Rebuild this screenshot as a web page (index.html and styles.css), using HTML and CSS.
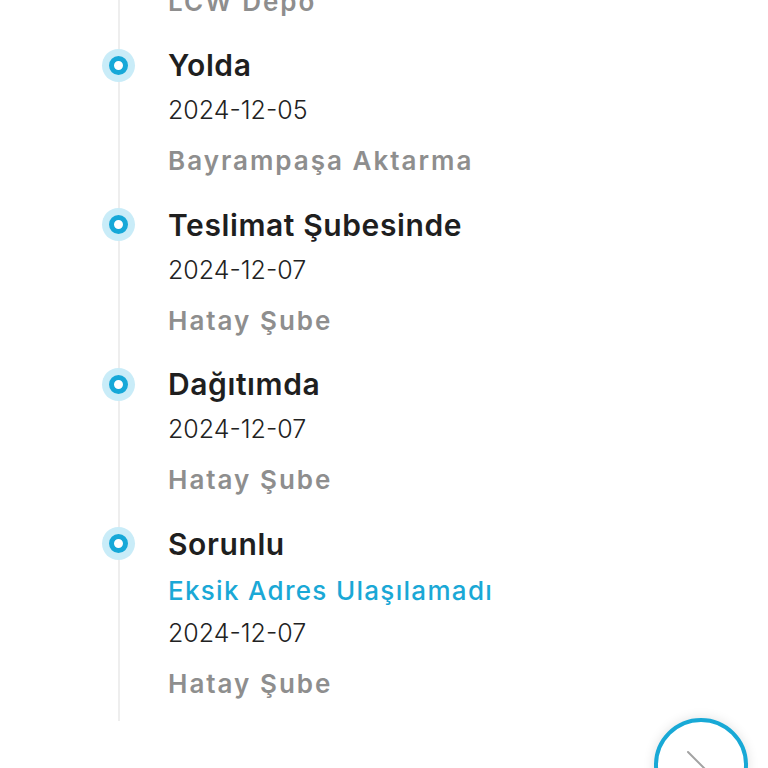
FILE: index.html
```html
<!DOCTYPE html>
<html lang="tr">
<head>
<meta charset="utf-8">
<link rel="stylesheet" href="styles.css">
</head>
<body>
<div class="page">
  <div class="timeline">
    <div class="event event-prev">
      <div class="loc">LCW Depo</div>
    </div>
    <div class="event">
      <span class="dot"></span>
      <div class="title">Yolda</div>
      <div class="date">2024-12-05</div>
      <div class="loc">Bayrampaşa Aktarma</div>
    </div>
    <div class="event">
      <span class="dot"></span>
      <div class="title">Teslimat Şubesinde</div>
      <div class="date">2024-12-07</div>
      <div class="loc">Hatay Şube</div>
    </div>
    <div class="event">
      <span class="dot"></span>
      <div class="title">Dağıtımda</div>
      <div class="date">2024-12-07</div>
      <div class="loc">Hatay Şube</div>
    </div>
    <div class="event">
      <span class="dot"></span>
      <div class="title">Sorunlu</div>
      <div class="note">Eksik Adres Ulaşılamadı</div>
      <div class="date">2024-12-07</div>
      <div class="loc">Hatay Şube</div>
    </div>
  </div>
  <button class="fab" aria-label="İleri">
    <svg width="40" height="40" viewBox="0 0 40 40"><path d="M7 7 L25 25" fill="none" stroke="#a3a3a3" stroke-width="2" stroke-linecap="round"/></svg>
  </button>
</div>
</body>
</html>
```
FILE: styles.css
```css
html, body {
  margin: 0;
  padding: 0;
  background: #ffffff;
}
body {
  font-family: Inter, "Open Sans", sans-serif;
  width: 768px;
  height: 768px;
  overflow: hidden;
}
.page {
  position: relative;
  width: 768px;
  height: 768px;
  overflow: hidden;
}
.timeline {
  margin-left: 118px;
  border-left: 2px solid #eeeeee;
  padding-left: 48px;
  padding-bottom: 10px;
  margin-top: -25.5px;
}
.event {
  position: relative;
  margin-top: 15.5px;
}
.event-prev {
  margin-top: 0;
}
.dot {
  position: absolute;
  left: -66px;
  top: 4.5px;
  width: 33px;
  height: 33px;
  border-radius: 50%;
  background: #c9ecf8;
  display: flex;
  align-items: center;
  justify-content: center;
}
.dot::after {
  content: "";
  width: 9px;
  height: 9px;
  border: 5px solid #16a8d8;
  border-radius: 50%;
  background: #ffffff;
}
.title {
  font-size: 30px;
  font-weight: 600;
  letter-spacing: 0.6px;
  color: #1f1f1f;
  line-height: 42px;
}
.date {
  font-size: 25px;
  font-weight: 300;
  color: #222222;
  line-height: 48px;
}
.loc {
  font-size: 26px;
  font-weight: 600;
  letter-spacing: 2px;
  color: #8e8e8e;
  line-height: 54px;
}
.note {
  font-size: 26px;
  font-weight: 500;
  letter-spacing: 1.3px;
  color: #1aa8d6;
  line-height: 36px;
  margin-top: 8px;
}
.fab {
  position: absolute;
  left: 654px;
  top: 718px;
  width: 94px;
  height: 94px;
  border-radius: 50%;
  border: 4px solid #18a9d6;
  background: #ffffff;
  box-shadow: 0 0 12px rgba(0, 0, 0, 0.12);
  padding: 0;
  margin: 0;
}
.fab svg {
  position: absolute;
  left: 23px;
  top: 23px;
}
```
